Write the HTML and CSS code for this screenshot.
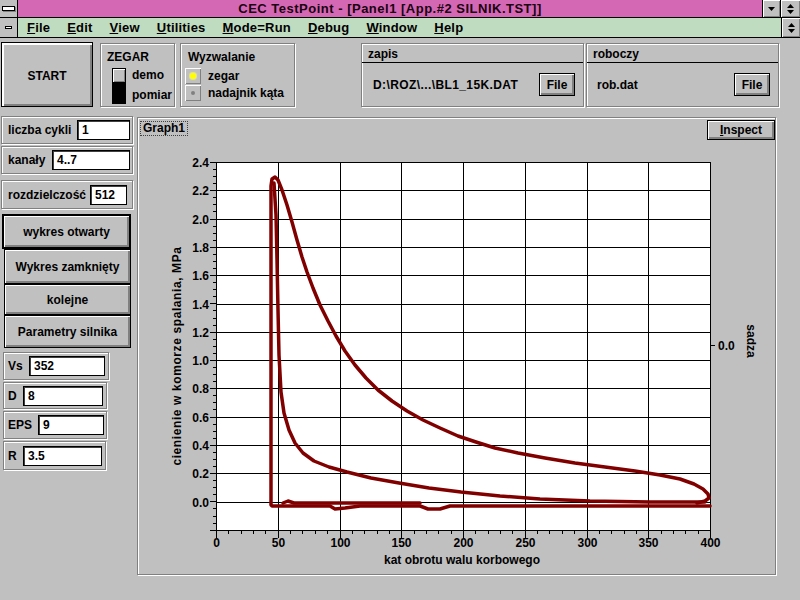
FILE: index.html
```html
<!DOCTYPE html>
<html lang="pl">
<head>
<meta charset="utf-8">
<title>CEC TestPoint</title>
<link rel="stylesheet" href="styles.css">
</head>
<body>
<header class="titlebar">
  <div class="sysbox"><span class="sysbar"></span></div>
  <div class="title">CEC TestPoint - [Panel1 [App.#2 SILNIK.TST]]</div>
  <div class="tbtn"><svg width="7" height="4" viewBox="0 0 7 4"><path d="M0 0h7L3.5 4z"/></svg></div>
  <div class="tbtn tbtn-wide"><svg width="7" height="4" viewBox="0 0 7 4"><path d="M0 4h7L3.5 0z"/></svg><svg width="7" height="4" viewBox="0 0 7 4"><path d="M0 0h7L3.5 4z"/></svg></div>
</header>
<div class="menubar">
  <div class="sysbox"><span class="sysdash"></span></div>
  <nav class="menu">
    <span><u>F</u>ile</span><span><u>E</u>dit</span><span><u>V</u>iew</span><span><u>U</u>tilities</span><span><u>M</u>ode=Run</span><span><u>D</u>ebug</span><span><u>W</u>indow</span><span><u>H</u>elp</span>
  </nav>
  <div class="tbtn tbtn-menu"><svg width="7" height="4" viewBox="0 0 7 4"><path d="M0 4h7L3.5 0z"/></svg><svg width="7" height="4" viewBox="0 0 7 4"><path d="M0 0h7L3.5 4z"/></svg></div>
</div>

<div class="toolbar">
  <div class="btn start">START</div>
  <div class="etched zegar">
    <div class="grp-label">ZEGAR</div>
    <div class="zegar-body">
      <div class="switch"><div class="knob"></div></div>
      <div class="switch-labels"><span>demo</span><span>pomiar</span></div>
    </div>
  </div>
  <div class="etched wyzw">
    <div class="grp-label">Wyzwalanie</div>
    <div class="radio-row"><span class="rbox"><span class="dot dot-on"></span></span><span>zegar</span></div>
    <div class="radio-row r2"><span class="rbox"><span class="dot"></span></span><span>nadajnik kąta</span></div>
  </div>
  <div class="etched filepanel zapis">
    <div class="fp-head">zapis</div>
    <div class="fp-body"><span class="path">D:\ROZ\...\BL1_15K.DAT</span><span class="btn fbtn">File</span></div>
  </div>
  <div class="etched filepanel roboczy">
    <div class="fp-head">roboczy</div>
    <div class="fp-body rb"><span>rob.dat</span><span class="btn fbtn">File</span></div>
  </div>
</div>

<div class="main">
  <aside class="leftcol">
    <div class="etched field f1"><span>liczba cykli</span><span class="inp i1">1</span></div>
    <div class="etched field f2"><span>kanały</span><span class="inp i2">4..7</span></div>
    <div class="etched field f3"><span>rozdzielczość</span><span class="inp i3">512</span></div>
    <div class="btn pbtn pbtn-focus">wykres otwarty</div>
    <div class="btn pbtn">Wykres zamknięty</div>
    <div class="btn pbtn pb3">kolejne</div>
    <div class="btn pbtn pb4">Parametry silnika</div>
    <div class="etched field fv"><span>Vs</span><span class="inp iv">352</span></div>
    <div class="etched field fd"><span>D</span><span class="inp id">8</span></div>
    <div class="etched field fe"><span>EPS</span><span class="inp ie">9</span></div>
    <div class="etched field fr"><span>R</span><span class="inp ir">3.5</span></div>
  </aside>

  <section class="etched graph">
    <div class="graph-head"><span class="glabel">Graph1</span><span class="btn inspect"><u>I</u>nspect</span></div>
    <svg class="plot" width="637" height="431" viewBox="138 143 637 431">
      <rect x="216.5" y="162.5" width="494" height="368" fill="#fff" stroke="#000" shape-rendering="crispEdges"/>
      <path stroke="#000" fill="none" shape-rendering="crispEdges" d="M278.5 162.5V530.5M340.5 162.5V530.5M401.5 162.5V530.5M463.5 162.5V530.5M525.5 162.5V530.5M587.5 162.5V530.5M648.5 162.5V530.5M216.5 190.5H710.5M216.5 219.5H710.5M216.5 247.5H710.5M216.5 275.5H710.5M216.5 304.5H710.5M216.5 332.5H710.5M216.5 360.5H710.5M216.5 388.5H710.5M216.5 417.5H710.5M216.5 445.5H710.5M216.5 473.5H710.5M216.5 502.5H710.5"/>
      <g stroke="#000" shape-rendering="crispEdges">
        <line x1="213" y1="162" x2="213" y2="532" stroke-width="6" stroke-dasharray="1 27.29"/>
        <line x1="214.5" y1="162" x2="214.5" y2="532" stroke-width="3" stroke-dasharray="1 6.07"/>
        <line x1="216" y1="534.5" x2="712" y2="534.5" stroke-width="7" stroke-dasharray="1 60.75"/>
        <line x1="216" y1="532.5" x2="712" y2="532.5" stroke-width="3" stroke-dasharray="1 11.35"/>
        <path d="M711 345.5h4"/>
      </g>
      <g class="ax" text-anchor="end">
        <text x="209" y="167">2.4</text>
        <text x="209" y="195">2.2</text>
        <text x="209" y="224">2.0</text>
        <text x="209" y="252">1.8</text>
        <text x="209" y="280">1.6</text>
        <text x="209" y="309">1.4</text>
        <text x="209" y="337">1.2</text>
        <text x="209" y="365">1.0</text>
        <text x="209" y="393">0.8</text>
        <text x="209" y="422">0.6</text>
        <text x="209" y="450">0.4</text>
        <text x="209" y="478">0.2</text>
        <text x="209" y="507">0.0</text>
      </g>
      <g class="ax" text-anchor="middle">
        <text x="216.5" y="547">0</text>
        <text x="278.5" y="547">50</text>
        <text x="340.5" y="547">100</text>
        <text x="401.5" y="547">150</text>
        <text x="463.5" y="547">200</text>
        <text x="525.5" y="547">250</text>
        <text x="587.5" y="547">300</text>
        <text x="648.5" y="547">350</text>
        <text x="710.5" y="547">400</text>
        <text x="462" y="564">kat obrotu walu korbowego</text>
        <text class="ytitle" transform="translate(181 356) rotate(-90)">cienienie w komorze spalania, MPa</text>
        <text transform="translate(747 341) rotate(90)">sadza</text>
      </g>
      <text class="ax" x="718" y="350">0.0</text>
      <g fill="none" stroke="#800000" stroke-width="3.5" stroke-linejoin="round" stroke-linecap="round">
        <polyline points="271,505 271,186 272,179 275,177 278,180 282,190 287,205 292,222 297,240 302,257 307,272 313,288 320,305 328,321 336,336 345,351 355,365 366,378 378,390 392,401 407,411 423,420 440,428 458,436 476,442 495,448 518,453 545,458 575,463 605,467 635,471 660,475 680,479 694,484 703,489 708,494 709,498 705,501 697,503"/>
        <polyline points="274,183 276,215 277,260 278,310 279,355 281,392 284,413 289,430 295,443 303,453 314,461 329,467 347,472 371,478 399,483 429,488 461,492 500,496 540,499 590,501 650,502 705,502"/>
        <polyline points="272,506 300,506 330,506 335,509 345,508 360,506 420,506 428,509 440,509 450,506 560,506 640,506 710,506"/>
        <polyline points="283,503 288,501 294,503 350,503 420,503"/>
      </g>
    </svg>
  </section>
</div>
</body>
</html>
```
FILE: styles.css
```css
*{box-sizing:border-box;margin:0;padding:0}
html,body{width:800px;height:600px;overflow:hidden}
body{background:#c0c0c0;font:bold 12px "Liberation Sans",Arial,sans-serif;color:#000}
u{text-decoration:underline;text-underline-offset:1px}

/* title bar */
.titlebar{display:flex;height:18px;border-bottom:1px solid #000;background:#d468b4}
.sysbox{flex:none;width:18px;border-right:1px solid #000;background:#c0c0c0;display:flex;align-items:center;justify-content:center}
.sysbar{width:13px;height:5px;background:#fff;border:1px solid #000;box-shadow:1px 1px 0 #808080}
.title{flex:1;text-align:center;font-size:13px;line-height:17px;letter-spacing:.5px;color:#1a0010}
.tbtn{flex:none;width:18px;border-left:1px solid #000;background:#c0c0c0;box-shadow:inset 1px 1px 0 #fff,inset -1px -1px 0 #808080;display:flex;flex-direction:column;align-items:center;justify-content:center;gap:2px}
.tbtn svg{display:block}
.tbtn-wide{width:20px}
.tbtn-menu{width:19px}

/* menu bar */
.menubar{display:flex;height:20px;border-bottom:1px solid #000;background:#c0dcc0}
.sysdash{width:7px;height:3px;background:#fff;border:1px solid #000}
.menu{flex:1;display:flex;gap:17px;padding-left:9px;font-size:13px;line-height:19px;letter-spacing:.2px}

/* generic */
.btn{background:#c0c0c0;border:1px solid #000;box-shadow:inset 1px 1px 0 #fff,inset -2px -2px 0 #808080;display:flex;align-items:center;justify-content:center;white-space:nowrap}
.etched{border:1px solid #808080;box-shadow:inset 1px 1px 0 #fff,1px 1px 0 #fff}

/* toolbar */
.toolbar{display:flex;align-items:flex-start;height:69px;padding-top:4px}
.start{margin-left:1px;width:92px;height:65px;padding-top:2px;box-shadow:inset 2px 2px 0 #fff,inset -2px -2px 0 #808080}
.grp-label{line-height:14px}
.zegar{margin:1px 0 0 7px;width:75px;height:64px;padding:6px 0 0 6px}
.zegar-body{display:flex;margin:4px 0 0 5px}
.switch{width:14px;height:36px;border:1px solid #000;background:#000}
.knob{height:13px;background:#c0c0c0;box-shadow:inset 1px 1px 0 #fff,inset -1px -1px 0 #808080}
.switch-labels{display:flex;flex-direction:column;justify-content:space-between;height:34px;margin-left:6px;line-height:14px}

.wyzw{margin:1px 0 0 5px;width:115px;height:64px;padding:6px 0 0 4px}
.wyzw .grp-label{padding-left:3px}
.radio-row{display:flex;align-items:center;gap:7px;height:16px}
.wyzw .grp-label+.radio-row{margin-top:4px}
.r2{height:17px}
.rbox{flex:none;width:16px;height:16px;background:#c0c0c0;box-shadow:inset 1px 1px 0 #fff,inset -1px -1px 0 #808080;display:flex;align-items:center;justify-content:center}
.dot{width:4px;height:4px;border-radius:50%;background:#808080}
.dot-on{width:6px;height:6px;background:#ffff00;box-shadow:0 0 1px 1px #e8e890}

.filepanel{margin-top:1px;height:64px;display:flex;flex-direction:column}
.zapis{margin-left:66px;width:223px}
.roboczy{margin-left:2px;width:193px}
.fp-head{height:19px;border-bottom:1px solid #000;padding:2px 0 0 6px;line-height:16px}
.fp-body{flex:1;display:flex;align-items:center;justify-content:space-between;padding:0 8px 0 11px}
.fp-body.rb{padding-left:10px}
.path{letter-spacing:.4px}
.fbtn{width:36px;height:23px}

/* main area */
.main{display:flex;align-items:flex-start;padding-top:9px}
.leftcol{flex:none;width:137px;display:flex;flex-direction:column;align-items:flex-start}
.field{display:flex;align-items:center;padding:0 2px 0 6px;white-space:nowrap}
.inp{margin-left:auto;height:20px;background:#fff;border:1px solid #000;box-shadow:inset 1px 1px 0 #404040;padding-left:4px;line-height:18px}
.f1{margin-left:1px;width:132px;height:28px}
.f2{margin:2px 0 0 1px;width:132px;height:28px}
.f3{margin:6px 0 0 1px;width:132px;height:29px;padding-right:5px}
.i1{width:53px}
.i2{width:78px}
.i3{width:37px}
.pbtn{margin-left:4px;width:127px;height:35px}
.pbtn-focus{margin:5px 0 0 2px;width:129px;border:2px solid #000}
.pb3{height:31px}
.pb4{height:33px}
.fv{margin:4px 0 0 3px;width:106px;height:28px;padding:0 3px 0 4px}
.fd{margin:2px 0 0 3px;width:104px;height:27px;padding:0 3px 0 4px}
.fe{margin:2px 0 0 3px;width:104px;height:28px;padding:0 2px 0 4px}
.fr{margin:2px 0 0 3px;width:103px;height:29px;padding:0 3px 0 4px}
.iv{width:76px}
.id{width:80px}
.ie{width:66px}
.ir{width:79px}

/* graph */
.graph{flex:none;margin-top:1px;width:639px;height:458px;display:flex;flex-direction:column}
.graph-head{display:flex;justify-content:space-between;align-items:flex-start;height:25px;padding:2px 0 0 2px}
.glabel{margin-top:1px;border:1px dotted #404040;height:15px;padding:0 2px;line-height:13px}
.inspect{width:68px;height:20px}
.plot{display:block}
.ax{font:bold 12px "Liberation Sans",Arial,sans-serif;fill:#000}
.ytitle{letter-spacing:.6px}
```
